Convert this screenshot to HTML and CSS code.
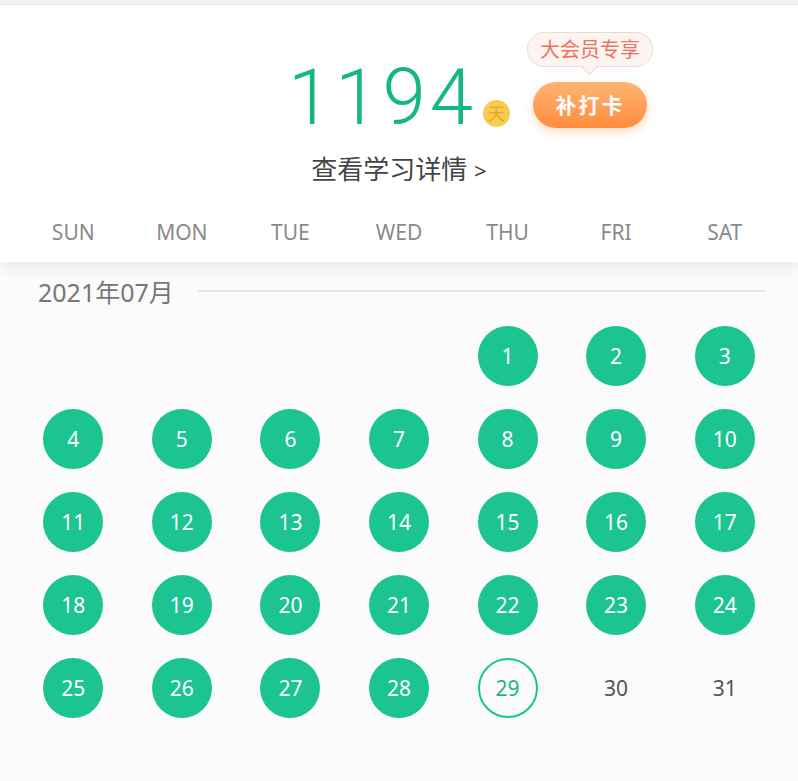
FILE: index.html
```html
<!DOCTYPE html>
<html lang="zh-CN">
<head>
  <meta charset="UTF-8">
  <meta name="viewport" content="width=device-width, initial-scale=1.0">
  <title>打卡日历</title>
  <link rel="stylesheet" href="styles.css">
</head>
<body>
  <div class="header">
    <div class="stat">
      <div class="days">1194</div>
      <div class="unit">天</div>
      <div class="vip">
        <div class="bubble">大会员专享</div>
        <div class="makeup">补打卡</div>
      </div>
    </div>
    <div class="detail">查看学习详情 <span class="arrow">&gt;</span></div>
    <div class="weekdays">
      <span>SUN</span><span>MON</span><span>TUE</span><span>WED</span><span>THU</span><span>FRI</span><span>SAT</span>
    </div>
  </div>

  <div class="calendar">
    <div class="month">
      <span>2021年07月</span>
      <div class="rule"></div>
    </div>
    <div class="grid" id="grid"></div>
  </div>

  <script>
    // July 2021 starts on a Thursday; 29 is today
    const grid = document.getElementById('grid');
    const firstDay = 4;
    const today = 29;

    for (let i = 0; i < firstDay; i++) {
      grid.appendChild(document.createElement('div'));
    }
    for (let d = 1; d <= 31; d++) {
      const cell = document.createElement('div');
      cell.classList.add('day');
      if (d < today) cell.classList.add('done');
      if (d === today) cell.classList.add('today');
      cell.textContent = d;
      grid.appendChild(cell);
    }
  </script>
</body>
</html>
```

FILE: styles.css
```css
body {
  margin: 0;
  font-family: "Noto Sans", "Noto Sans CJK SC", sans-serif;
  background-color: #fbfbfb;
  border-top: 4px solid #f2f2f2;
}
.header {
  background-color: #fff;
  border-top: 1px solid #e4e4e4;
  box-shadow: 0 6px 14px rgba(0, 0, 0, 0.07);
  position: relative;
  z-index: 1;
}
.stat {
  position: relative;
  display: flex;
  align-items: flex-end;
  justify-content: center;
  height: 132px;
  width: 224px;
  margin: 0 auto;
}
.days {
  font-family: Roboto, sans-serif;
  font-weight: 300;
  font-size: 78px;
  letter-spacing: 4px;
  line-height: 1;
  color: #14b685;
}
.unit {
  width: 27px;
  height: 27px;
  border-radius: 50%;
  background-color: #f6cd4f;
  color: #e9a326;
  font-size: 17px;
  line-height: 27px;
  text-align: center;
  margin-left: 6px;
  margin-bottom: 10px;
}
.vip {
  position: absolute;
  left: 240px;
  top: 27px;
  display: flex;
  flex-direction: column;
  align-items: center;
}
.bubble {
  position: relative;
  padding: 0 12px;
  height: 33px;
  line-height: 33px;
  white-space: nowrap;
  border: 1px solid #eddad6;
  border-radius: 17px;
  background-color: #fdf3f1;
  color: #e8755f;
  font-size: 20px;
}
.bubble::after {
  content: "";
  position: absolute;
  left: 56px;
  bottom: -7px;
  width: 10px;
  height: 10px;
  background-color: #fdf3f1;
  border-right: 1px solid #eddad6;
  border-bottom: 1px solid #eddad6;
  transform: rotate(45deg);
}
.makeup {
  margin-top: 15px;
  width: 114px;
  height: 46px;
  line-height: 46px;
  border-radius: 23px;
  background: linear-gradient(180deg, #ffb474, #ff8c3e);
  box-shadow: 0 4px 10px rgba(255, 140, 60, 0.3);
  color: #fff;
  font-size: 21px;
  font-weight: bold;
  letter-spacing: 2px;
  text-align: center;
}
.detail {
  text-align: center;
  font-size: 26px;
  color: #444;
  margin-top: 17px;
  line-height: 30px;
}
.arrow {
  font-size: 22px;
}
.weekdays {
  display: grid;
  grid-template-columns: repeat(7, 1fr);
  padding: 0 19px;
  margin-top: 32px;
  height: 45px;
}
.weekdays span {
  text-align: center;
  font-size: 21px;
  color: #8a8a8a;
  line-height: 30px;
}
.calendar {
  padding: 14px 19px 40px;
}
.month {
  display: flex;
  align-items: center;
  padding-left: 19px;
  height: 30px;
}
.month span {
  font-size: 25px;
  color: #777;
}
.rule {
  flex: 1;
  height: 2px;
  background-color: #e6e6e6;
  margin: 0 14px 0 24px;
}
.grid {
  display: grid;
  grid-template-columns: repeat(7, 1fr);
  row-gap: 23px;
  margin-top: 20px;
}
.day {
  justify-self: center;
  width: 60px;
  height: 60px;
  border-radius: 50%;
  display: flex;
  align-items: center;
  justify-content: center;
  font-size: 21px;
  color: #555;
  box-sizing: border-box;
}
.day.done {
  background-color: #1bc490;
  color: #fff;
}
.day.today {
  border: 2px solid #1bc490;
  color: #1bb585;
}
```
